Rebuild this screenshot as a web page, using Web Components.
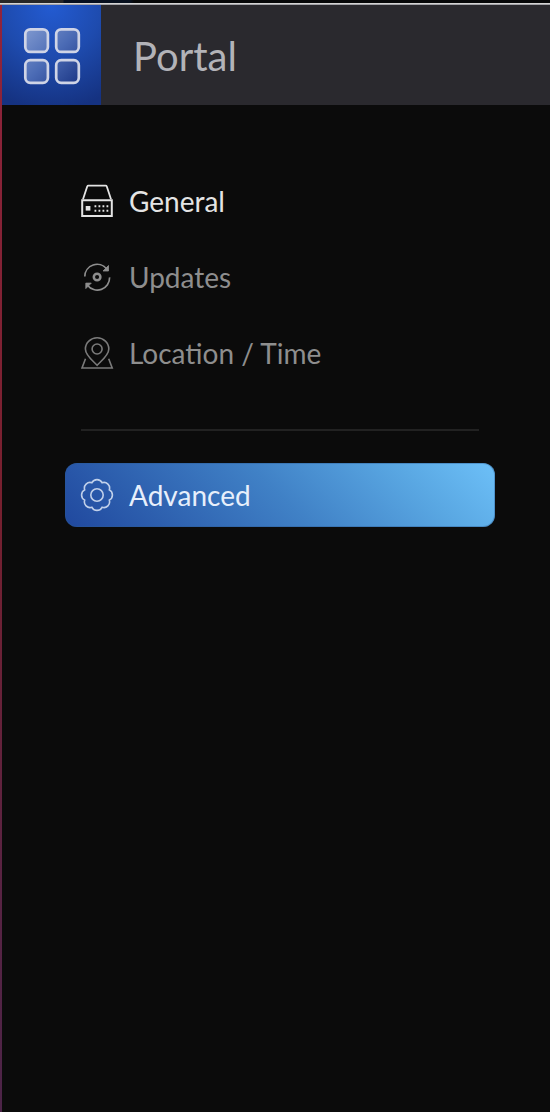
<!DOCTYPE html>
<html lang="en">
<head>
<meta charset="utf-8">
<title>Portal</title>
<style>
html,body{margin:0;height:100%;overflow:hidden;background:#0b0b0b}
</style>
</head>
<body>
<portal-window>
  <portal-header>Portal</portal-header>
  <portal-nav>
    <nav-item icon="drive" tone="bright">General</nav-item>
    <nav-item icon="update">Updates</nav-item>
    <nav-item icon="location">Location / Time</nav-item>
    <nav-divider></nav-divider>
    <nav-item icon="gear" tone="active">Advanced</nav-item>
  </portal-nav>
</portal-window>
<script>
class PortalWindow extends HTMLElement {
  constructor() {
    super();
    this.attachShadow({mode: "open"}).innerHTML = `
      <style>
        :host{display:flex;flex-direction:column;height:1112px;font-family:Lato,"Liberation Sans",sans-serif;font-variant-ligatures:common-ligatures;background:#0b0b0b}
        .strip{height:3px;background:linear-gradient(90deg,#272727 0 63px,#07101f 64px 130px,#070809 134px)}
        .rim{height:2px;background:linear-gradient(#d4d4d4 50%,#a3a3a8 50%)}
        .main{display:flex;flex:1}
        .edge{width:2px;background:linear-gradient(#91243c,#77202f 45%,#582343 80%,#4c2448)}
        .body{flex:1;min-width:0}
      </style>
      <div class="strip"></div><div class="rim"></div>
      <div class="main"><div class="edge"></div><div class="body"><slot></slot></div></div>`;
  }
}
class PortalHeader extends HTMLElement {
  constructor() {
    super();
    this.attachShadow({mode: "open"}).innerHTML = `
      <style>
        :host{display:flex;align-items:stretch;height:100px;background:#2a292e;color:#b3b3b8;font-size:40px;line-height:48px}
        .logo{width:99px;background:radial-gradient(ellipse 100px 105px at 50% 0,#235bd2 0,#1e4bae 50%,#153281 100%)}
        svg{display:block}
        .title{padding:27px 0 0 32px}
      </style>
      <div class="logo"><svg width="99" height="100" viewBox="2 5 99 100">
        <defs><linearGradient id="g" gradientUnits="userSpaceOnUse" x1="25" y1="29" x2="79" y2="83">
          <stop stop-color="#8099d0"/><stop offset=".5" stop-color="#4b6bb5"/><stop offset="1" stop-color="#1c3786"/></linearGradient></defs>
        <g fill="url(#g)" stroke="#cfd4e6" stroke-width="2.7">
          <rect x="25.3" y="29.3" width="22.6" height="22.6" rx="5"/><rect x="56.2" y="29.3" width="22.6" height="22.6" rx="5"/>
          <rect x="25.3" y="60.2" width="22.6" height="22.6" rx="5"/><rect x="56.2" y="60.2" width="22.6" height="22.6" rx="5"/>
        </g></svg></div>
      <div class="title"><slot></slot></div>`;
  }
}
class PortalNav extends HTMLElement {
  constructor() {
    super();
    this.attachShadow({mode: "open"}).innerHTML = `
      <style>:host{display:flex;flex-direction:column;gap:12px;width:430px;padding:64px 0 0 63px}</style><slot></slot>`;
  }
}
class NavDivider extends HTMLElement {
  constructor() {
    super();
    this.attachShadow({mode: "open"}).innerHTML = `
      <style>:host{display:block;height:2px;margin:32px 16px 20px;background:#222}</style>`;
  }
}
/* Gear outline: eight round lobes around the centre, one pointing straight up. */
const scallops = (() => {
  const n = 8, base = 13.3, pts = [];
  for (let i = 0; i <= n; i++) {
    const a = (i + .5) * 2 * Math.PI / n;
    pts.push((16 + base * Math.cos(a)).toFixed(2) + " " + (16 + base * Math.sin(a)).toFixed(2));
  }
  return "M" + pts[0] + pts.slice(1).map(p => "A5.7 5.7 0 0 1 " + p).join("") + "Z";
})();
const icons = {
  drive: `<path d="M2 14.3 6.2 1.5Q6.5.7 7.4.7H24.6Q25.5.7 25.8 1.5L30 14.3" stroke-width="1.8"/>
    <path d="M1.2 15.2H30.8V31H1.2Z" stroke-width="2"/>
    <path d="M4.7 21H9.4V25.6H4.7Z" fill="currentColor" stroke="none"/>
    <path d="M13.5 21.3H28M13.5 25.7H28" stroke-width="2" stroke-dasharray="1.8 2.2"/>`,
  update: `<path d="M3.8 15.4A12.3 12.3 0 0 1 25.7 8M28.6 16.4A12.3 12.3 0 0 1 6.5 24.2" stroke-width="1.7"/>
    <path d="M27.5 4.5V10H22ZM4.8 27.6V22.1H10.3Z" fill="currentColor" stroke-width=".8"/>
    <circle cx="16.1" cy="16" r="3.3" stroke-width="2.5"/>`,
  location: `<path d="M16.1 28.3C13 24.8 4.4 18.6 4.4 12A11.7 11.2 0 0 1 27.8 12C27.8 18.6 19.2 24.8 16.1 28.3Z"/>
    <circle cx="16.1" cy="12" r="5"/><path d="M4.5 21.8 1 31H31.2L27.7 21.8"/>`,
  gear: `<path d="${scallops}"/><circle cx="16" cy="16" r="6.2"/>`
};
class NavItem extends HTMLElement {
  constructor() {
    super();
    this.attachShadow({mode: "open"});
  }
  connectedCallback() {
    this.shadowRoot.innerHTML = `
      <style>
        :host{display:flex;align-items:center;box-sizing:border-box;height:64px;padding:0 16px;color:#8e8e8e;font-size:28px;line-height:32px;border-radius:12px}
        :host([tone=bright]){color:#e4e4e4}
        :host([tone=active]){color:#e7effb;background:linear-gradient(45deg,#20489e 0%,#4081c6 50%,#5aa8e3 80%,#6dc0f8 100%);box-shadow:inset 0 0 0 1px #2a5a9266}
        svg{width:32px;height:32px;margin-right:16px;flex:none;fill:none;stroke:currentColor;stroke-width:1.6;overflow:visible}
        :host([icon=location]) svg{opacity:.85}
        :host([tone=active]) svg{opacity:.8}
        .label{white-space:nowrap;padding-bottom:1px}
      </style>
      <svg viewBox="0 0 32 32" aria-hidden="true">${icons[this.getAttribute("icon")]}</svg>
      <span class="label"><slot></slot></span>`;
  }
}
customElements.define("portal-window", PortalWindow);
customElements.define("portal-header", PortalHeader);
customElements.define("portal-nav", PortalNav);
customElements.define("nav-divider", NavDivider);
customElements.define("nav-item", NavItem);
</script>
</body>
</html>
